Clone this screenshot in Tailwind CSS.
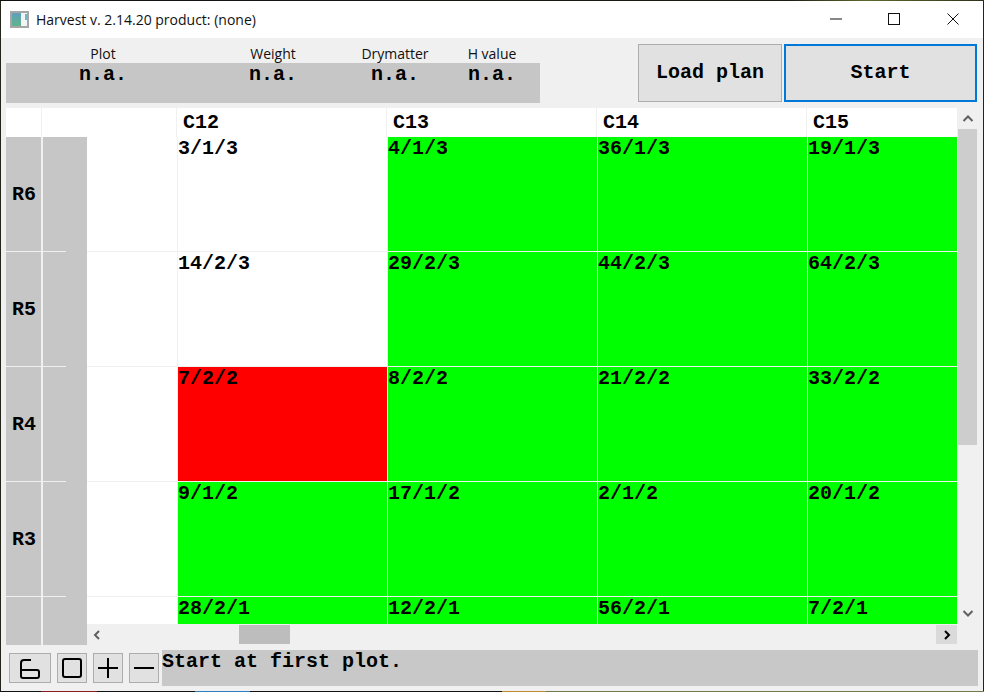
<!DOCTYPE html>
<html lang="en">
<head>
  <meta charset="UTF-8" />
  <title>Harvest</title>
  <script src="https://cdn.jsdelivr.net/npm/@tailwindcss/browser@4"></script>
</head>
<body class="w-[984px] h-[692px] overflow-hidden bg-[#23241a] font-['Liberation_Mono',monospace] font-bold text-[20px] leading-[22px] text-black">
  <!-- desktop showing above the window -->
  <div class="h-px bg-[linear-gradient(90deg,#111_0%,#1c1c14_80%,#5b6a2c_88%,#2c3318_100%)]"></div>

  <div class="w-[982px] h-[690px] ml-[1px] bg-[#f0f0f0] flex flex-col">

    <!-- title bar -->
    <div class="h-[37px] bg-white flex items-center font-['Open_Sans',sans-serif] font-normal text-[14px] text-[#111]">
      <svg class="ml-[9px] mr-[7px]" width="19" height="17" viewBox="0 0 19 17">
        <defs>
          <linearGradient id="appicon" x1="0" y1="0" x2="0" y2="1">
            <stop offset="0" stop-color="#5f9fbc"/>
            <stop offset="1" stop-color="#5fb48a"/>
          </linearGradient>
        </defs>
        <rect x="1" y="1" width="17" height="15" fill="#f2f4f5" stroke="#a6a6a6" stroke-width="2"/>
        <rect x="2" y="2" width="9" height="13" fill="url(#appicon)"/>
        <rect x="15" y="3" width="2" height="6" fill="#6fb5c4"/>
      </svg>
      <span>Harvest v. 2.14.20 product: (none)</span>
      <svg class="ml-auto mr-[46px] mb-px" width="12" height="2" viewBox="0 0 12 2"><rect width="12" height="1" y="0.5" fill="#111"/></svg>
      <svg class="mr-[47px] mb-px" width="12" height="12" viewBox="0 0 12 12"><rect x="0.5" y="0.5" width="11" height="11" fill="none" stroke="#111"/></svg>
      <svg class="mr-[24px] mb-px" width="12" height="12" viewBox="0 0 12 12"><path d="M0.5 0.5 L11.5 11.5 M11.5 0.5 L0.5 11.5" stroke="#111" fill="none"/></svg>
    </div>

    <!-- toolbar -->
    <div class="h-[70px] flex pl-[5px]">
      <div class="w-[534px] flex flex-col">
        <div class="h-[25px] pt-[7px] grid grid-cols-[194px_146px_98px_96px] text-center font-['Open_Sans',sans-serif] font-normal text-[14px] leading-[18px] text-[#111]">
          <span>Plot</span><span>Weight</span><span>Drymatter</span><span>H value</span>
        </div>
        <div class="h-[40px] pt-px bg-[#c6c6c6] grid grid-cols-[194px_146px_98px_96px] text-center">
          <span>n.a.</span><span>n.a.</span><span>n.a.</span><span>n.a.</span>
        </div>
      </div>
      <button class="ml-[98px] mt-[6px] w-[144px] h-[58px] bg-[#e1e1e1] border border-[#adadad]">Load plan</button>
      <button class="ml-[2px] mt-[6px] w-[193px] h-[58px] bg-[#e1e1e1] border-2 border-[#0078d7]">Start</button>
    </div>

    <!-- table with scrollbars -->
    <div class="h-[537px] flex pl-[5px]">
      <div class="w-[951px] flex flex-col">
        <!-- column headers -->
        <div class="h-[29px] bg-white flex">
          <div class="w-[36px] border-r border-[#f0f0f0]"></div>
          <div class="w-[135px] border-r border-[#f0f0f0]"></div>
          <div class="w-[210px] pl-[6px] pt-[4px] border-r border-[#f0f0f0]">C12</div>
          <div class="w-[210px] pl-[6px] pt-[4px] border-r border-[#f0f0f0]">C13</div>
          <div class="w-[210px] pl-[6px] pt-[4px] border-r border-[#f0f0f0]">C14</div>
          <div class="flex-1 pl-[6px] pt-[4px]">C15</div>
        </div>

        <div class="flex-1 flex">
          <!-- row headers -->
          <div class="w-[81px] bg-[#c6c6c6] flex flex-col">
            <div class="h-[114px] flex"><div class="w-[37px] border-r-2 border-[#f0f0f0] flex items-center pl-[6px] pt-[2px]">R6</div></div>
            <div class="w-[60px] h-px bg-[#f0f0f0]"></div>
            <div class="h-[114px] flex"><div class="w-[37px] border-r-2 border-[#f0f0f0] flex items-center pl-[6px] pt-[2px]">R5</div></div>
            <div class="w-[60px] h-px bg-[#f0f0f0]"></div>
            <div class="h-[114px] flex"><div class="w-[37px] border-r-2 border-[#f0f0f0] flex items-center pl-[6px] pt-[2px]">R4</div></div>
            <div class="w-[60px] h-px bg-[#f0f0f0]"></div>
            <div class="h-[114px] flex"><div class="w-[37px] border-r-2 border-[#f0f0f0] flex items-center pl-[6px] pt-[2px]">R3</div></div>
            <div class="w-[60px] h-px bg-[#f0f0f0]"></div>
            <div class="flex-1 flex"><div class="w-[37px] border-r-2 border-[#f0f0f0]"></div></div>
          </div>

          <div class="flex-1 flex flex-col">
            <!-- plots -->
            <div class="h-[487px] bg-white grid grid-cols-[91px_210px_210px_210px_149px] grid-rows-[115px_115px_115px_115px_27px]">
              <div class="border-r border-b border-[#f0f0f0]"></div>
              <div class="border-r border-b border-[#f0f0f0] pt-px">3/1/3</div>
              <div class="border-r border-b border-[#f0f0f0] pt-px bg-[#00ff00]">4/1/3</div>
              <div class="border-r border-b border-[#f0f0f0] pt-px bg-[#00ff00]">36/1/3</div>
              <div class="border-b border-[#f0f0f0] pt-px bg-[#00ff00]">19/1/3</div>

              <div class="border-r border-b border-[#f0f0f0]"></div>
              <div class="border-r border-b border-[#f0f0f0] pt-px">14/2/3</div>
              <div class="border-r border-b border-[#f0f0f0] pt-px bg-[#00ff00]">29/2/3</div>
              <div class="border-r border-b border-[#f0f0f0] pt-px bg-[#00ff00]">44/2/3</div>
              <div class="border-b border-[#f0f0f0] pt-px bg-[#00ff00]">64/2/3</div>

              <div class="border-r border-b border-[#f0f0f0]"></div>
              <div class="border-r border-b border-[#f0f0f0] pt-px bg-[#ff0000]">7/2/2</div>
              <div class="border-r border-b border-[#f0f0f0] pt-px bg-[#00ff00]">8/2/2</div>
              <div class="border-r border-b border-[#f0f0f0] pt-px bg-[#00ff00]">21/2/2</div>
              <div class="border-b border-[#f0f0f0] pt-px bg-[#00ff00]">33/2/2</div>

              <div class="border-r border-b border-[#f0f0f0]"></div>
              <div class="border-r border-b border-[#f0f0f0] pt-px bg-[#00ff00]">9/1/2</div>
              <div class="border-r border-b border-[#f0f0f0] pt-px bg-[#00ff00]">17/1/2</div>
              <div class="border-r border-b border-[#f0f0f0] pt-px bg-[#00ff00]">2/1/2</div>
              <div class="border-b border-[#f0f0f0] pt-px bg-[#00ff00]">20/1/2</div>

              <div class="border-r border-[#f0f0f0]"></div>
              <div class="border-r border-[#f0f0f0] pt-px bg-[#00ff00]">28/2/1</div>
              <div class="border-r border-[#f0f0f0] pt-px bg-[#00ff00]">12/2/1</div>
              <div class="border-r border-[#f0f0f0] pt-px bg-[#00ff00]">56/2/1</div>
              <div class="pt-px bg-[#00ff00]">7/2/1</div>
            </div>
            <!-- horizontal scrollbar -->
            <div class="h-[21px] flex items-center">
              <svg class="ml-[5px]" width="10" height="10" viewBox="0 0 10 10"><path d="M7 1 L3 5 L7 9" fill="none" stroke="#606060" stroke-width="2"/></svg>
              <div class="ml-[137px] w-[51px] h-[19px] bg-[#bdbdbd]"></div>
              <div class="ml-auto w-[21px] h-[19px] bg-[#dadada] flex items-center justify-center">
                <svg width="10" height="10" viewBox="0 0 10 10"><path d="M3 1 L7 5 L3 9" fill="none" stroke="#000" stroke-width="2"/></svg>
              </div>
            </div>
          </div>
        </div>
      </div>

      <!-- vertical scrollbar -->
      <div class="ml-px w-[19px] flex flex-col items-center">
        <div class="h-[21px] w-[19px] shrink-0 flex items-center justify-center">
          <svg width="12" height="12" viewBox="0 0 12 12"><polyline points="1.5,8 6,3.5 10.5,8" fill="none" stroke="#606060" stroke-width="2"/></svg>
        </div>
        <div class="w-[19px] h-[316px] bg-[#cdcdcd]"></div>
        <svg class="mt-[162px] shrink-0" width="12" height="12" viewBox="0 0 12 12"><path d="M1.5 4 L6 8.5 L10.5 4" fill="none" stroke="#606060" stroke-width="2"/></svg>
      </div>
    </div>

    <!-- bottom bar -->
    <div class="h-[36px] mt-[5px] flex items-center">
      <button class="ml-[8px] w-[42px] h-[30px] bg-[#e1e1e1] border border-[#adadad] flex items-center justify-center">
        <svg width="22" height="21" viewBox="0 0 22 21"><path d="M12 2 H5 Q2 2 2 5 V18 Q2 20 4 20 H18 Q20 20 20 18 V14 Q20 12 18 12 H2" fill="none" stroke="#000" stroke-width="2"/></svg>
      </button>
      <button class="ml-[6px] w-[30px] h-[30px] bg-[#e1e1e1] border border-[#adadad] flex items-center justify-center">
        <svg width="20" height="20" viewBox="0 0 20 20"><rect x="1" y="1" width="18" height="18" rx="2" fill="none" stroke="#000" stroke-width="2"/></svg>
      </button>
      <button class="ml-[6px] w-[30px] h-[30px] bg-[#e1e1e1] border border-[#adadad] flex items-center justify-center">
        <svg width="20" height="20" viewBox="0 0 20 20"><path d="M0 10 H20 M10 0 V20" stroke="#000" stroke-width="2"/></svg>
      </button>
      <button class="ml-[6px] w-[30px] h-[30px] bg-[#e1e1e1] border border-[#adadad] flex items-center justify-center">
        <svg width="20" height="20" viewBox="0 0 20 20"><path d="M0 10 H20" stroke="#000" stroke-width="2"/></svg>
      </button>
      <div class="ml-[3px] w-[816px] h-[36px] pt-px bg-[#c8c8c8]">Start at first plot.</div>
    </div>
  </div>

  <!-- desktop showing below the window -->
  <div class="h-px flex">
    <div class="w-[41px] bg-[#111]"></div><div class="w-[56px] bg-[#8a1c1c]"></div><div class="w-[98px] bg-[#111]"></div><div class="w-[55px] bg-[#2f7fc0]"></div><div class="w-[252px] bg-[#111]"></div><div class="w-[44px] bg-[#c08a30]"></div><div class="flex-1 bg-[#6f7a4a]"></div>
  </div>
</body>
</html>
